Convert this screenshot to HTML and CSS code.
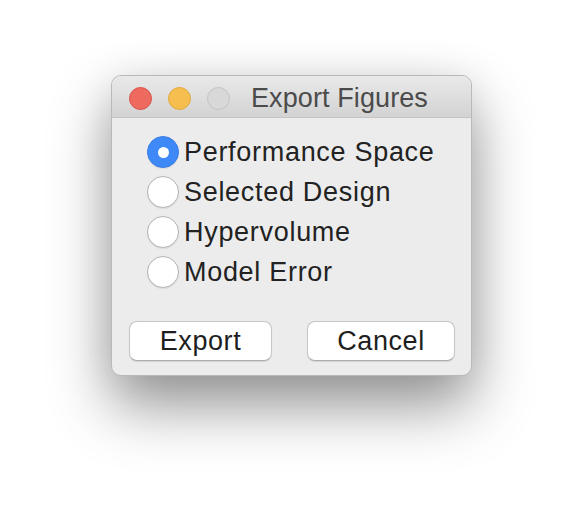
FILE: index.html
```html
<!DOCTYPE html>
<html>
<head>
<meta charset="utf-8">
<link rel="stylesheet" href="styles.css">
</head>
<body>
<div class="window">
  <div class="titlebar">
    <div class="lights">
      <span class="light red"></span>
      <span class="light yellow"></span>
      <span class="light grey"></span>
    </div>
    <div class="title">Export Figures</div>
  </div>
  <div class="content">
    <div class="radios">
      <label class="radio"><span class="dot on"></span><span class="lbl">Performance Space</span></label>
      <label class="radio"><span class="dot"></span><span class="lbl">Selected Design</span></label>
      <label class="radio"><span class="dot"></span><span class="lbl">Hypervolume</span></label>
      <label class="radio"><span class="dot"></span><span class="lbl">Model Error</span></label>
    </div>
    <div class="buttons">
      <button class="btn export">Export</button>
      <button class="btn cancel">Cancel</button>
    </div>
  </div>
</div>
</body>
</html>
```

FILE: styles.css
```css
html, body {
  margin: 0;
  padding: 0;
  background: #ffffff;
}
body {
  padding: 75px 0 0 111px;
  min-height: 524px;
  box-sizing: border-box;
  font-family: "Liberation Sans", Arial, sans-serif;
}
.window {
  width: 359px;
  height: 299px;
  border: 1px solid #b9b9b9;
  border-radius: 10px;
  background: #ececec;
  box-shadow: 0 30px 60px rgba(0,0,0,0.42), 0 0 40px rgba(0,0,0,0.07);
  overflow: hidden;
  display: flex;
  flex-direction: column;
}
.titlebar {
  height: 42px;
  flex: none;
  border-bottom: 1px solid #c4c4c4;
  background: linear-gradient(#e9e9e9, #d3d3d3);
  display: flex;
  align-items: center;
  padding-top: 3px;
  box-sizing: border-box;
}
.lights {
  display: flex;
  gap: 16px;
  padding-left: 17px;
}
.light {
  width: 23px;
  height: 23px;
  border-radius: 50%;
  box-sizing: border-box;
}
.red { background: #ee6a5f; border: 1px solid #d9534a; }
.yellow { background: #f6be4f; border: 1px solid #deaa3f; }
.grey { background: #d8d8d8; border: 1px solid #c3c3c3; }
.title {
  margin-left: 21px;
  font-size: 27px;
  color: #4b4b4b;
  letter-spacing: 0.1px;
}
.content {
  flex: 1;
  display: flex;
  flex-direction: column;
  padding: 14px 16px 15px 17px;
}
.radios {
  display: flex;
  flex-direction: column;
  padding-left: 18px;
}
.radio {
  height: 40px;
  display: flex;
  align-items: center;
  gap: 5px;
}
.dot {
  width: 32px;
  height: 32px;
  border-radius: 50%;
  box-sizing: border-box;
  background: #ffffff;
  border: 1px solid #b3b3b3;
  box-shadow: 0 1px 1px rgba(0,0,0,0.08);
  display: flex;
  align-items: center;
  justify-content: center;
}
.dot.on {
  background: #3e88f7;
  border-color: #3a7fe6;
}
.dot.on::after {
  content: "";
  width: 11px;
  height: 11px;
  border-radius: 50%;
  background: #ffffff;
}
.lbl {
  font-size: 27px;
  color: #222222;
  letter-spacing: 0.7px;
}
.buttons {
  margin-top: 29px;
  display: flex;
  justify-content: space-between;
}
.btn {
  height: 40px;
  border: 1px solid #c6c6c6;
  border-bottom-color: #acacac;
  border-radius: 8px;
  background: #ffffff;
  box-shadow: 0 1px 1px rgba(0,0,0,0.1);
  font-family: "Liberation Sans", Arial, sans-serif;
  font-size: 27px;
  color: #1e1e1e;
  letter-spacing: 0.6px;
  padding: 0;
}
.export { width: 143px; }
.cancel { width: 148px; }
```
